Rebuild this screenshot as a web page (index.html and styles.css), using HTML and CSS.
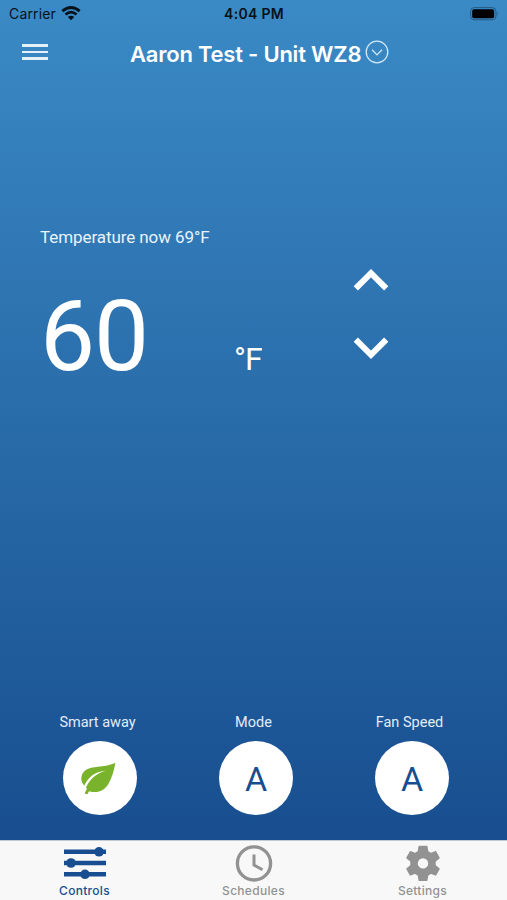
FILE: index.html
```html
<!DOCTYPE html>
<html lang="en">
<head>
  <meta charset="UTF-8">
  <title>Aaron Test - Unit WZ8</title>
  <link rel="stylesheet" href="styles.css">
</head>
<body>
  <div class="status">
    <div class="carrier">
      <span>Carrier</span>
      <svg width="20" height="15" viewBox="0 0 20 15">
        <g fill="none" stroke="#071119" stroke-width="2.8">
          <path d="M1.3 5.1 Q10 -2 18.7 5.1"/>
          <path d="M4.5 8.5 Q10 3.8 15.5 8.5"/>
        </g>
        <path d="M6.8 11 Q10 8.3 13.2 11 L10 14.2 Z" fill="#071119"/>
      </svg>
    </div>
    <div class="time">4:04 PM</div>
    <svg class="battery" width="30" height="14" viewBox="0 0 30 14">
      <rect x="1.6" y="0.6" width="25.4" height="12.2" rx="3.6" fill="none" stroke="#245b84"/>
      <rect x="3.2" y="2.3" width="22" height="8.9" rx="1.8" fill="#000"/>
      <path d="M28.2 4.8 Q30 6.7 28.2 8.6 Z" fill="#245b84"/>
    </svg>
  </div>

  <header>
    <div class="menu"><i></i><i></i><i></i></div>
    <h1>Aaron Test - Unit WZ8</h1>
    <svg class="more" width="24" height="24" viewBox="0 0 24 24" fill="none" stroke="#d3e8f7" stroke-width="1.3">
      <circle cx="12" cy="12" r="10.8"/>
      <path d="M7 9.8 L12 14.9 L17 9.8"/>
    </svg>
  </header>

  <main>
    <p class="now">Temperature now 69°F</p>
    <div class="temp">
      <span class="value">60</span>
      <span class="unit">°F</span>
      <div class="arrows">
        <svg width="36" height="24" viewBox="0 0 36 24"><path d="M2.8 20.4 L18 5.2 L33.2 20.4"/></svg>
        <svg width="36" height="24" viewBox="0 0 36 24"><path d="M2.8 3.6 L18 18.8 L33.2 3.6"/></svg>
      </div>
    </div>
  </main>

  <section class="modes">
    <div class="mode">
      <span>Smart away</span>
      <div class="circle">
        <svg width="74" height="74" viewBox="12 4 222 222">
          <path fill="#79b22b" d="M169 67 C166 86 159 112 148 130 C137 148 121 156 103 154 C97 154 92 151 89 153 C87 157 87 161 82 160 C78 160 77 157 79 153 L84 144 L75 134 C65 122 64 106 74 94 C87 79 112 80 130 77 C146 75 156 71 169 67 Z"/>
          <path fill="#fff" d="M75 137 C86 112 105 91 142 90 C116 96 97 109 82 138 L79 142 Z"/>
        </svg>
      </div>
    </div>
    <div class="mode">
      <span>Mode</span>
      <div class="circle">A</div>
    </div>
    <div class="mode">
      <span>Fan Speed</span>
      <div class="circle">A</div>
    </div>
  </section>

  <nav>
    <a class="tab active">
      <svg width="42" height="36" viewBox="0 0 42 36">
        <path d="M0 6.8 H42 M0 18 H42 M0 29.3 H42" stroke="currentColor" stroke-width="4.4"/>
        <g fill="currentColor"><circle cx="35" cy="6.8" r="4.8"/><circle cx="7" cy="18" r="4.8"/><circle cx="21" cy="29.3" r="4.8"/></g>
      </svg>
      Controls
    </a>
    <a class="tab">
      <svg width="38" height="38" viewBox="0 0 38 38" fill="none" stroke="currentColor">
        <circle cx="19" cy="18.4" r="16.6" stroke-width="3.3"/>
        <path d="M19 9.4 V20 L27.5 24.7" stroke-width="3"/>
      </svg>
      Schedules
    </a>
    <a class="tab">
      <svg width="38" height="38" viewBox="0 0 38 38">
        <path fill="currentColor" stroke="currentColor" stroke-width="1.5" stroke-linejoin="round" d="M15.2 1.5 H22.8 L23.6 6.7 L26.9 8.6 L31.6 6.8 L35 12.9 L31 16.2 V20.6 L35 23.8 L31.6 29.9 L26.9 28.1 L23.6 30 L22.8 35.2 H15.2 L14.4 30 L11.1 28.1 L6.4 29.9 L3 23.8 L7 20.6 V16.2 L3 12.9 L6.4 6.8 L11.1 8.6 L14.4 6.7 Z"/>
        <circle cx="19" cy="18.4" r="5.2" fill="#f8f8f8"/>
      </svg>
      Settings
    </a>
  </nav>
</body>
</html>
```
FILE: styles.css
```css
* {
  box-sizing: border-box;
}

body {
  margin: 0;
  height: 900px;
  display: flex;
  flex-direction: column;
  overflow: hidden;
  font-family: Roboto, sans-serif;
  color: #fff;
  background: linear-gradient(#3a8ac5 0, #184e8f 840px);
}

svg {
  display: block;
  flex: none;
}

.status {
  display: grid;
  grid-template-columns: 1fr auto 1fr;
  align-items: center;
  height: 27px;
  padding: 0 8px 0 9px;
  font-family: Inter, sans-serif;
  font-size: 14px;
  color: #071119;
}

.carrier {
  display: flex;
  align-items: center;
  gap: 5px;
  letter-spacing: 0.15px;
}

.time {
  font-weight: 600;
  letter-spacing: 0.3px;
}

.battery {
  justify-self: end;
}

header {
  display: flex;
  align-items: center;
  height: 50px;
  padding-left: 22px;
}

.menu {
  display: flex;
  flex-direction: column;
  gap: 4px;
  width: 26px;
  margin-right: 82px;
}

.menu i {
  height: 2.5px;
  background: #e4f1fa;
}

h1 {
  margin: 4px 0 0;
  width: 231px;
  font-family: Inter, sans-serif;
  font-size: 22px;
  font-weight: 600;
  letter-spacing: -0.22px;
  white-space: nowrap;
}

.more {
  margin-left: 4px;
}

main {
  padding: 150px 0 0 40px;
}

.now {
  margin: 0;
  font-size: 17px;
  line-height: 20px;
  letter-spacing: -0.08px;
  color: #e9f3fb;
}

.temp {
  display: flex;
  align-items: baseline;
  height: 140px;
  margin-top: 20px;
}

.value {
  width: 194px;
  font-size: 98px;
  line-height: 140px;
  letter-spacing: -1.2px;
}

.unit {
  width: 78px;
  font-size: 32px;
  letter-spacing: -1px;
}

.arrows {
  display: flex;
  flex-direction: column;
  gap: 44px;
  align-self: flex-start;
  margin: 1px 0 0 40.5px;
}

.arrows path {
  fill: none;
  stroke: #fff;
  stroke-width: 6;
}

.modes {
  display: flex;
  gap: 56px;
  margin: auto 0 25px 47.5px;
}

.mode {
  display: flex;
  flex-direction: column;
  align-items: center;
  width: 100px;
  gap: 9px;
  font-size: 14.5px;
  line-height: 18px;
  color: #e3ecf6;
}

.circle {
  display: flex;
  align-items: center;
  justify-content: center;
  width: 74px;
  height: 74px;
  padding-top: 1px;
  margin-left: 5px;
  border-radius: 50%;
  background: #fff;
  color: #184e8f;
  font-size: 34px;
}

nav {
  display: flex;
  height: 60px;
  background: #f8f8f8;
  border-top: 1px solid #c3ccd6;
}

.tab {
  display: flex;
  flex-direction: column;
  align-items: center;
  justify-content: space-between;
  width: 169px;
  padding: 4px 0 2px;
  font-family: Inter, sans-serif;
  font-size: 12px;
  font-weight: 500;
  line-height: 14px;
  letter-spacing: 0.3px;
  color: #929292;
}

.tab.active {
  color: #184e8f;
}
```
